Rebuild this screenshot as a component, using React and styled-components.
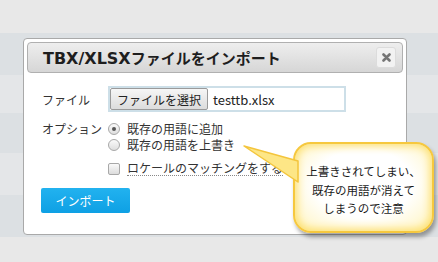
import React from "react";
import styled, { createGlobalStyle } from "styled-components";

const GlobalStyle = createGlobalStyle`
  html, body {
    margin: 0;
    padding: 0;
    background: #e6e6e6;
    font-family: "Noto Sans CJK JP", "Noto Sans", sans-serif;
  }
`;

const Page = styled.div`
  position: relative;
  width: 438px;
  height: 262px;
  overflow: hidden;
  background: #e8e8e8;
`;

const Backdrop = styled.div`
  display: flex;
  flex-direction: column;
  padding-top: 33px;
`;

const Stripe = styled.div`
  height: ${(p) => p.h}px;
  background: ${(p) => (p.dark ? "#dce0e3" : "#e4e6e8")};
`;

const Dialog = styled.div`
  position: absolute;
  left: 23px;
  top: 38px;
  width: 376px;
  height: 189px;
  padding: 3px;
  box-sizing: content-box;
  background: #fff;
  border: 1px solid #a9a9a9;
  border-radius: 4px;
  display: flex;
  flex-direction: column;
`;

const TitleBar = styled.div`
  height: 29px;
  display: flex;
  align-items: center;
  justify-content: space-between;
  padding: 0 6px 0 15px;
  border: 1px solid #b0b0b0;
  border-radius: 4px;
  background: linear-gradient(#eeeeee, #d6d6d6);
`;

const Title = styled.span`
  font-family: "DejaVu Sans", "Noto Sans CJK JP", sans-serif;
  font-size: 16px;
  font-weight: bold;
  color: #1e1e1e;
`;

const TitleKana = styled.span`
  font-family: "Noto Sans CJK JP", sans-serif;
  font-size: 15px;
`;

const CloseButton = styled.div`
  width: 18px;
  height: 19px;
  display: flex;
  align-items: center;
  justify-content: center;
  background: #f2f2f2;
  border: 1px solid #dcdcdc;
  border-radius: 3px;
`;

const Body = styled.div`
  display: flex;
  flex-direction: column;
  padding: 13px 0 0 15px;
`;

const Row = styled.div`
  display: flex;
  align-items: ${(p) => (p.top ? "flex-start" : "center")};
  margin-bottom: ${(p) => p.gap || 0}px;
`;

const Label = styled.div`
  width: 66px;
  font-size: 12px;
  color: #333;
  line-height: 15px;
`;

const FileBox = styled.div`
  display: flex;
  align-items: center;
  width: 234px;
  height: 22px;
  border: 2px solid #cddfe8;
  background: #fff;
`;

const FileButton = styled.div`
  height: 20px;
  padding: 0 6px;
  display: flex;
  align-items: center;
  font-size: 12px;
  color: #222;
  background: linear-gradient(#f6f6f6, #dcdcdc);
  border: 1px solid #9a9a9a;
  border-radius: 2px;
`;

const FileName = styled.span`
  margin-left: 5px;
  font-size: 13px;
  color: #222;
`;

const Options = styled.div`
  display: flex;
  flex-direction: column;
  gap: 1px;
`;

const Option = styled.label`
  display: flex;
  align-items: center;
  height: 15px;
  font-size: 12px;
  line-height: 15px;
  color: #333;
`;

const Radio = styled.span`
  width: 10px;
  height: 10px;
  margin-right: 7px;
  border-radius: 50%;
  border: 1px solid #a8a8a8;
  background: linear-gradient(#fafafa, #dedede);
  display: flex;
  align-items: center;
  justify-content: center;

  &::after {
    content: "";
    width: 4px;
    height: 4px;
    border-radius: 50%;
    background: ${(p) => (p.checked ? "#555" : "transparent")};
  }
`;

const Checkbox = styled.span`
  width: 10px;
  height: 10px;
  margin-right: 7px;
  border-radius: 2px;
  border: 1px solid #a8a8a8;
  background: linear-gradient(#fafafa, #dcdcdc);
`;

const Dotted = styled.span`
  border-bottom: 1px dotted #888;
  line-height: 14px;
`;

const ImportButton = styled.div`
  width: 89px;
  height: 25px;
  margin-left: -1px;
  display: flex;
  align-items: center;
  justify-content: center;
  font-size: 12px;
  color: #fff;
  border-radius: 2px;
  background: linear-gradient(#22b2ef, #0ea0e4);
`;

const Callout = styled.div`
  position: absolute;
  left: 293px;
  top: 142px;
  width: 137px;
  height: 87px;
  border: 2px solid #f6c83e;
  border-radius: 18px;
  background: radial-gradient(ellipse at 50% 45%, #ffffff 50%, #fff8d6 80%, #fff0a8 100%);
  box-shadow: inset 0 0 9px 2px #fcdf6e, 2px 4px 4px rgba(0, 0, 0, 0.35);
  display: flex;
  align-items: center;
  justify-content: center;
  text-align: center;
  font-size: 11.5px;
  line-height: 18.5px;
  color: #1a1a1a;
`;

const Tail = styled.svg`
  position: absolute;
  left: -54px;
  top: 0;
  overflow: visible;
`;

const CalloutText = styled.div`
  position: relative;
  margin-top: 5px;
`;

const stripes = [42, 38, 40, 42, 42];

export default function App() {
  return (
    <>
      <GlobalStyle />
      <Page>
        <Backdrop>
          {stripes.map((h, i) => (
            <Stripe key={i} h={h} dark={i % 2 === 0} />
          ))}
        </Backdrop>

        <Dialog>
          <TitleBar>
            <Title>
              TBX/XLSX<TitleKana>ファイルをインポート</TitleKana>
            </Title>
            <CloseButton>
              <svg width="9" height="9" viewBox="0 0 9 9">
                <path d="M1.5 1.5 L7.5 7.5 M7.5 1.5 L1.5 7.5" stroke="#767676" strokeWidth="2.6" strokeLinecap="round" />
              </svg>
            </CloseButton>
          </TitleBar>

          <Body>
            <Row gap={9}>
              <Label>ファイル</Label>
              <FileBox>
                <FileButton>ファイルを選択</FileButton>
                <FileName>testtb.xlsx</FileName>
              </FileBox>
            </Row>

            <Row top gap={9}>
              <Label>オプション</Label>
              <Options>
                <Option>
                  <Radio checked />
                  既存の用語に追加
                </Option>
                <Option>
                  <Radio />
                  既存の用語を上書き
                </Option>
              </Options>
            </Row>

            <Row gap={12}>
              <Label />
              <Option>
                <Checkbox />
                <Dotted>ロケールのマッチングをする</Dotted>
              </Option>
            </Row>

            <Row>
              <ImportButton>インポート</ImportButton>
            </Row>
          </Body>
        </Dialog>

        <Callout>
          <Tail width="60" height="40">
            <path d="M57 17 L3 2 L57 38 Z" fill="#fde686" stroke="#f4c53c" strokeWidth="1.5" strokeLinejoin="round" />
          </Tail>
          <CalloutText>
            上書きされてしまい、
            <br />
            既存の用語が消えて
            <br />
            しまうので注意
          </CalloutText>
        </Callout>
      </Page>
    </>
  );
}
